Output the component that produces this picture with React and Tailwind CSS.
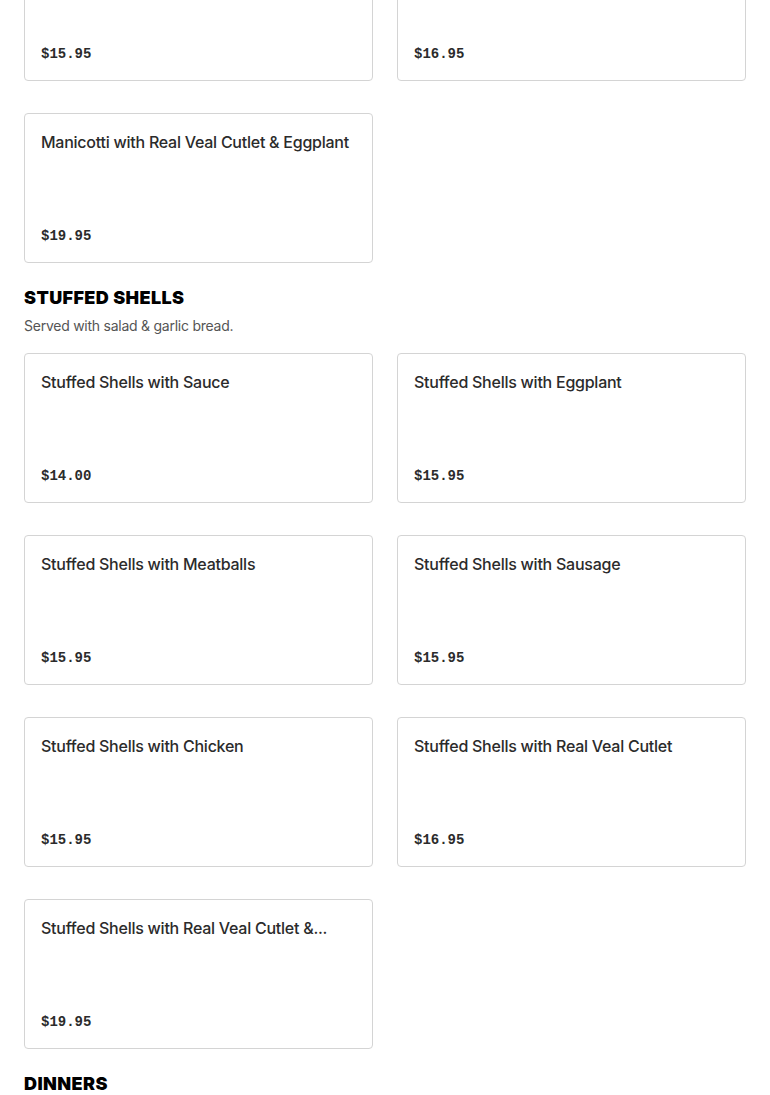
import React from 'react';

const MenuCard = ({ name, price }) => {
  return (
    <div className="h-[150px] flex flex-col justify-between border border-[#d4d4d4] rounded-[4px] bg-white p-4">
      <div className="text-[16px] leading-6 font-medium tracking-[-0.25px] text-[#2b2b2b] truncate">
        {name}
      </div>
      <div className="text-[14px] leading-5 font-bold text-[#2b2b2b] font-['Liberation_Mono',monospace]">
        {price}
      </div>
    </div>
  );
};

const Section = ({ title, subtitle, items }) => {
  return (
    <section className="mt-[21px]">
      <h2 className="text-[18px] leading-7 font-black tracking-[0.4px] text-black">{title}</h2>
      {subtitle && <p className="mt-1 text-[14px] leading-5 tracking-[-0.25px] text-[#555]">{subtitle}</p>}
      {items && (
        <div className="mt-[17px] grid grid-cols-2 gap-x-6 gap-y-8">
          {items.map((item) => (
            <MenuCard key={item.name} {...item} />
          ))}
        </div>
      )}
    </section>
  );
};

const manicotti = [
  { name: 'Manicotti with Real Veal Cutlet', price: '$15.95' },
  { name: 'Manicotti with Real Veal Cutlet & Sausage', price: '$16.95' },
  { name: 'Manicotti with Real Veal Cutlet & Eggplant', price: '$19.95' },
];

const shells = [
  { name: 'Stuffed Shells with Sauce', price: '$14.00' },
  { name: 'Stuffed Shells with Eggplant', price: '$15.95' },
  { name: 'Stuffed Shells with Meatballs', price: '$15.95' },
  { name: 'Stuffed Shells with Sausage', price: '$15.95' },
  { name: 'Stuffed Shells with Chicken', price: '$15.95' },
  { name: 'Stuffed Shells with Real Veal Cutlet', price: '$16.95' },
  { name: 'Stuffed Shells with Real Veal Cutlet &...', price: '$19.95' },
];

export default function App() {
  return (
    <div className="bg-white min-h-screen overflow-hidden font-['Inter',sans-serif]">
      <div className="px-6 -mt-[69px]">
        {/* previous section, scrolled partly out of view */}
        <div className="grid grid-cols-2 gap-x-6 gap-y-8">
          {manicotti.map((item) => (
            <MenuCard key={item.name} {...item} />
          ))}
        </div>

        <Section title="STUFFED SHELLS" subtitle="Served with salad & garlic bread." items={shells} />

        <Section title="DINNERS" />
      </div>
    </div>
  );
}
